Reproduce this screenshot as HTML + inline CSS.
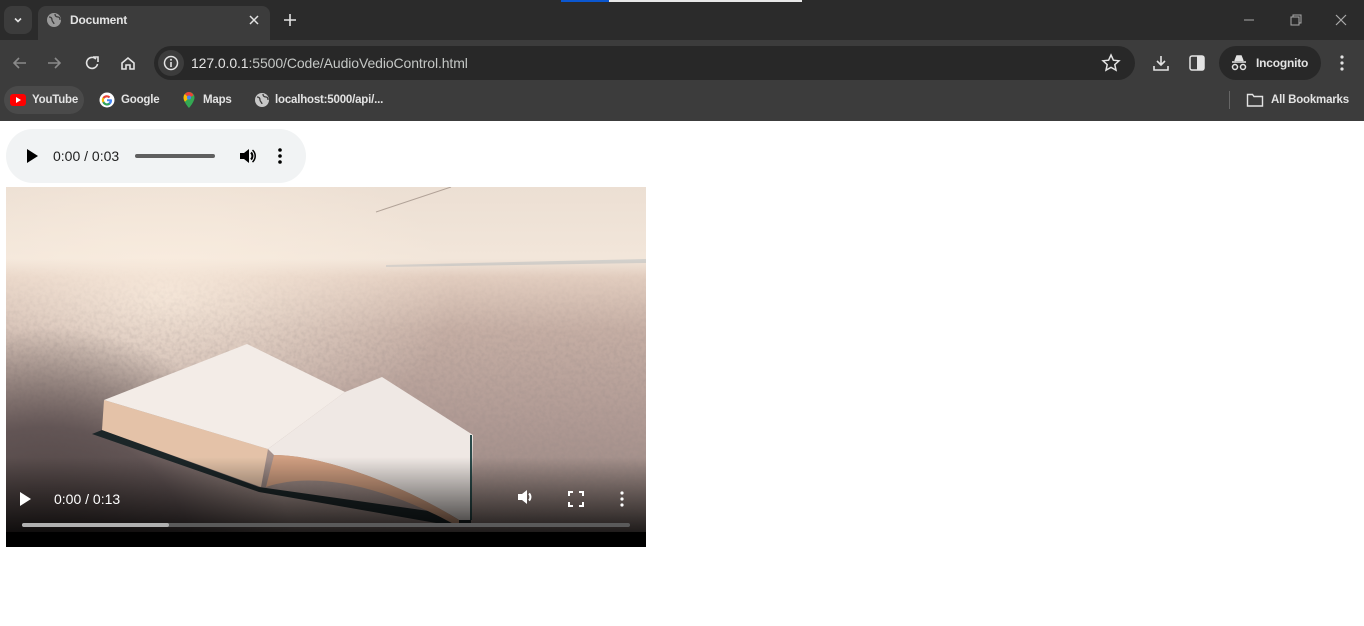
<!DOCTYPE html>
<html><head><meta charset="utf-8"><style>
*{box-sizing:border-box;margin:0;padding:0}
body{width:1364px;height:626px;overflow:hidden;background:#fff;font-family:"Liberation Sans",sans-serif;position:relative}
.abs{position:absolute}
.t{color:#e3e3e3;font-size:11.5px;letter-spacing:-0.2px}
</style></head><body>
<div class="abs" style="left:0;top:0;width:1364px;height:40px;background:#2b2b2b"></div>
<div class="abs" style="left:561px;top:0;width:48px;height:2px;background:#0b57d0"></div>
<div class="abs" style="left:609px;top:0;width:193px;height:2px;background:#e8e8e8"></div>
<div class="abs" style="left:4px;top:6px;width:28px;height:28px;border-radius:8px;background:#3c3c3c"></div>
<svg class="abs" style="left:11px;top:13px" width="14" height="14"><path d="M4 5.5l3 3 3-3" stroke="#e3e3e3" stroke-width="1.6" fill="none"/></svg>
<div class="abs" style="left:38px;top:6px;width:232px;height:34px;background:#3c3c3c;border-radius:8px 8px 0 0"></div>
<svg class="abs" style="left:46px;top:12px" width="16" height="16"><circle cx="8" cy="8" r="7" fill="#9a9a9a"/><path d="M3 5c2 0 3 1 3 3s2 2 2 4M9 2c0 2 1 3 3 3s2 2 2 3" stroke="#3c3c3c" stroke-width="1.3" fill="none"/></svg>
<div class="abs t" style="left:70px;top:13px;font-weight:bold;font-size:12px">Document</div>
<svg class="abs" style="left:247px;top:13px" width="14" height="14"><path d="M3 3l8 8M11 3l-8 8" stroke="#e3e3e3" stroke-width="1.5"/></svg>
<svg class="abs" style="left:282px;top:12px" width="16" height="16"><path d="M8 2v12M2 8h12" stroke="#e3e3e3" stroke-width="1.6"/></svg>
<svg class="abs" style="left:1240px;top:12px" width="120" height="16"><path d="M4 8h10" stroke="#aaa" stroke-width="1"/><rect x="51" y="5" width="8" height="8" stroke="#aaa" fill="none"/><path d="M53 5V3h8v8h-2" stroke="#aaa" fill="none"/><path d="M96 3l10 10M106 3l-10 10" stroke="#aaa" stroke-width="1.2"/></svg>
<div class="abs" style="left:0;top:40px;width:1364px;height:81px;background:#3c3c3c"></div>
<svg class="abs" style="left:10px;top:54px" width="136" height="18"><path d="M16 9H4M9 4L4 9l5 5" stroke="#8a8a8a" stroke-width="1.6" fill="none"/><path d="M38 9h12M45 4l5 5-5 5" stroke="#8a8a8a" stroke-width="1.6" fill="none"/><path d="M86 5a5.5 5.5 0 1 0 1.5 5" stroke="#e3e3e3" stroke-width="1.6" fill="none"/><path d="M83 3h5v5" stroke="#e3e3e3" stroke-width="1.6" fill="none"/><path d="M112 9l6-5 6 5v6h-4v-4h-4v4h-4z" stroke="#e3e3e3" stroke-width="1.6" fill="none"/></svg>
<div class="abs" style="left:154px;top:46px;width:981px;height:34px;border-radius:17px;background:#282828"></div>
<div class="abs" style="left:158px;top:50px;width:26px;height:26px;border-radius:13px;background:#3c3c3c"></div>
<svg class="abs" style="left:163px;top:55px" width="16" height="16"><circle cx="8" cy="8" r="6.5" stroke="#e3e3e3" stroke-width="1.5" fill="none"/><path d="M8 7v5" stroke="#e3e3e3" stroke-width="1.6"/><circle cx="8" cy="4.8" r="1" fill="#e3e3e3"/></svg>
<div class="abs" style="left:191px;top:55px;font-size:14px;color:#e3e3e3;letter-spacing:-0.1px">127.0.0.1<span style="color:#c4c7c5">:5500/Code/AudioVedioControl.html</span></div>
<svg class="abs" style="left:1101px;top:53px" width="20" height="20"><path d="M10 2l2.4 5.2 5.6.6-4.2 3.8 1.2 5.6L10 14.4 5 17.2l1.2-5.6L2 7.8l5.6-.6z" stroke="#e3e3e3" stroke-width="1.5" fill="none"/></svg>
<svg class="abs" style="left:1151px;top:53px" width="20" height="20"><path d="M10 3v9M6 8l4 4 4-4M3 13v4h14v-4" stroke="#e3e3e3" stroke-width="1.6" fill="none"/></svg>
<svg class="abs" style="left:1188px;top:54px" width="18" height="18"><rect x="2" y="2" width="14" height="14" rx="2" stroke="#e3e3e3" stroke-width="1.5" fill="none"/><rect x="9" y="2" width="7" height="14" fill="#e3e3e3"/></svg>
<div class="abs" style="left:1219px;top:46px;width:102px;height:34px;border-radius:17px;background:#282828"></div>
<svg class="abs" style="left:1229px;top:54px" width="20" height="18"><path d="M3 8h14M6 7l2-5h4l2 5" stroke="#e3e3e3" stroke-width="1.6" fill="#e3e3e3"/><circle cx="6" cy="13" r="2.5" stroke="#e3e3e3" stroke-width="1.5" fill="none"/><circle cx="14" cy="13" r="2.5" stroke="#e3e3e3" stroke-width="1.5" fill="none"/></svg>
<div class="abs t" style="left:1256px;top:56px;font-weight:bold;font-size:12px">Incognito</div>
<svg class="abs" style="left:1334px;top:54px" width="16" height="18"><circle cx="8" cy="3" r="1.6" fill="#e3e3e3"/><circle cx="8" cy="9" r="1.6" fill="#e3e3e3"/><circle cx="8" cy="15" r="1.6" fill="#e3e3e3"/></svg>
<div class="abs" style="left:4px;top:86px;width:80px;height:28px;border-radius:14px;background:#4a4a4a"></div>
<svg class="abs" style="left:10px;top:94px" width="16" height="12"><rect x="0" y="0" width="16" height="12" rx="3" fill="#f00"/><path d="M6 3l5 3-5 3z" fill="#fff"/></svg>
<div class="abs t" style="left:32px;top:94px;font-weight:bold">YouTube</div>
<svg class="abs" style="left:99px;top:92px" width="16" height="16"><circle cx="8" cy="8" r="7.5" fill="#fff"/><path d="M12.5 7.3H8v2h2.6a3 3 0 1 1-.8-3.2l1.4-1.4A5 5 0 1 0 13 8z" fill="#4285f4"/><path d="M3.5 5.5A5 5 0 0 1 11.2 4.7L9.8 6.1A3 3 0 0 0 5.3 6.6z" fill="#ea4335"/><path d="M3.5 10.5L5.3 9.4A3 3 0 0 0 9.9 11l1.5 1.2A5 5 0 0 1 3.5 10.5z" fill="#34a853"/><path d="M3.5 5.5l1.8 1.1a3 3 0 0 0 0 2.8l-1.8 1.1a5 5 0 0 1 0-5z" fill="#fbbc05"/></svg>
<div class="abs t" style="left:121px;top:94px;font-weight:bold">Google</div>
<svg class="abs" style="left:182px;top:91px" width="14" height="18"><path d="M7 1a5.5 5.5 0 0 0-5.5 5.5C1.5 11 7 17 7 17s5.5-6 5.5-10.5A5.5 5.5 0 0 0 7 1z" fill="#34a853"/><path d="M7 1a5.5 5.5 0 0 0-4.2 2l4.2 4 4.5-2.8A5.5 5.5 0 0 0 7 1z" fill="#ea4335"/><path d="M2.8 3A5.5 5.5 0 0 0 1.5 6.5c0 1.5.6 3 1.4 4.3L7 7z" fill="#fbbc05"/><circle cx="7" cy="6.5" r="2" fill="#4285f4"/></svg>
<div class="abs t" style="left:203px;top:94px;font-weight:bold">Maps</div>
<svg class="abs" style="left:254px;top:92px" width="16" height="16"><circle cx="8" cy="8" r="7" fill="#c8c8c8"/><path d="M3 5c2 0 3 1 3 3s2 2 2 4M9 2c0 2 1 3 3 3s2 2 2 3" stroke="#3c3c3c" stroke-width="1.3" fill="none"/></svg>
<div class="abs t" style="left:275px;top:94px;font-weight:bold">localhost:5000/api/...</div>
<div class="abs" style="left:1229px;top:91px;width:1px;height:18px;background:#666"></div>
<svg class="abs" style="left:1246px;top:92px" width="18" height="16"><path d="M1.5 2.5h5l1.5 2h8.5v9.5h-15z" stroke="#e3e3e3" stroke-width="1.4" fill="none"/></svg>
<div class="abs t" style="left:1271px;top:94px;font-weight:bold">All Bookmarks</div>
<div class="abs" style="left:6px;top:129px;width:300px;height:54px;border-radius:27px;background:#f1f3f4"></div>
<svg class="abs" style="left:26px;top:148px" width="14" height="16"><path d="M1 1l11 7-11 7z" fill="#000"/></svg>
<div class="abs" style="left:53px;top:148px;font-size:14px;color:#1f1f1f">0:00 / 0:03</div>
<div class="abs" style="left:135px;top:154px;width:80px;height:4px;border-radius:2px;background:#5f5f5f"></div>
<svg class="abs" style="left:238px;top:146px" width="20" height="20"><path d="M2 7h4l5-4v14l-5-4H2z" fill="#000"/><path d="M13 6.5a5 5 0 0 1 0 7" stroke="#000" stroke-width="2" fill="none"/><path d="M14.5 4a8 8 0 0 1 0 12" stroke="#000" stroke-width="1.5" fill="none"/></svg>
<svg class="abs" style="left:274px;top:147px" width="12" height="18"><circle cx="6" cy="3" r="1.8"/><circle cx="6" cy="9" r="1.8"/><circle cx="6" cy="15" r="1.8"/></svg>
<svg class="abs" style="left:6px;top:187px" width="640" height="360" viewBox="0 0 640 360">
<defs>
<linearGradient id="bg" x1="0" y1="0" x2="0" y2="1">
<stop offset="0" stop-color="#ecdfd3"/><stop offset=".2" stop-color="#f2e6da"/><stop offset=".25" stop-color="#e2cdbf"/><stop offset=".4" stop-color="#c5aea4"/><stop offset=".65" stop-color="#b09a94"/><stop offset="1" stop-color="#8e7e7a"/></linearGradient>
<linearGradient id="nm" x1="0" y1="0" x2="0" y2="1"><stop offset="0" stop-color="#fff" stop-opacity="0"/><stop offset=".3" stop-color="#fff" stop-opacity="1"/></linearGradient>
<mask id="m"><rect x="0" y="80" width="640" height="280" fill="url(#nm)"/></mask>
<linearGradient id="bot" x1="0" y1="0" x2="0" y2="1"><stop offset="0" stop-color="#000" stop-opacity="0"/><stop offset=".6" stop-color="#000" stop-opacity=".55"/><stop offset="1" stop-color="#000" stop-opacity=".95"/></linearGradient>
<radialGradient id="dark" gradientUnits="userSpaceOnUse" cx="40" cy="390" r="250"><stop offset="0" stop-color="#3e3533"/><stop offset=".6" stop-color="#55494a" stop-opacity=".85"/><stop offset="1" stop-color="#5a4e4c" stop-opacity="0"/></radialGradient>
<radialGradient id="sun" cx=".25" cy=".3" r=".45"><stop offset="0" stop-color="#fbeee0" stop-opacity=".8"/><stop offset="1" stop-color="#fbeee0" stop-opacity="0"/></radialGradient>
<filter id="n"><feTurbulence type="fractalNoise" baseFrequency=".25" numOctaves="2" seed="3"/><feColorMatrix values="0 0 0 0 0.3  0 0 0 0 0.25  0 0 0 0 0.24  0 0 0 .9 -.35"/></filter>
</defs>
<rect width="640" height="360" fill="url(#bg)"/>
<path d="M380 78L640 72V76L380 80z" fill="#8fa2ae" opacity=".3"/>
<rect width="640" height="360" fill="url(#sun)"/>
<g mask="url(#m)"><rect x="0" y="80" width="640" height="280" filter="url(#n)" opacity=".55"/></g>
<rect x="0" y="0" width="640" height="360" fill="url(#dark)"/>
<path d="M370 25L445 0" stroke="#8a7a70" stroke-width="1" opacity=".6"/>
<path d="M86 247L96 243L253 300L465 330V336L453 340L253 305z" fill="#1c2628"/>
<path d="M98 213L96 243L255 300L262 262z" fill="#e4c2a8"/>
<path d="M98 213L241 157L339 205L262 262z" fill="#f3ece7"/>
<path d="M262 262L339 205L376 190L467 248L465 333L453 333C400 300 320 268 268 268z" fill="#efe8e4"/>
<path d="M268 268C320 268 400 300 453 333L453 340C400 310 320 280 260 300z" fill="#d2a082"/>
<path d="M465 248V333" stroke="#2a4a4a" stroke-width="2"/>
<rect y="270" width="640" height="90" fill="url(#bot)"/>
<rect y="345" width="640" height="15" fill="#000"/>
<path d="M14 305l11 7-11 7z" fill="#fff"/>
<text x="48" y="317" fill="#fff" font-family="Liberation Sans" font-size="14">0:00 / 0:13</text>
<path d="M512 307h4l5-4v14l-5-4h-4z" fill="#fff"/><path d="M523 306.5a5 5 0 0 1 0 7" stroke="#fff" stroke-width="2" fill="none"/>
<path d="M563 309v-4h4M573 305h4v4M577 315v4h-4M567 319h-4v-4" stroke="#fff" stroke-width="2" fill="none"/>
<circle cx="616" cy="306" r="1.6" fill="#fff"/><circle cx="616" cy="312" r="1.6" fill="#fff"/><circle cx="616" cy="318" r="1.6" fill="#fff"/>
<rect x="16" y="336" width="608" height="4" rx="2" fill="#5a5a5a"/>
<rect x="16" y="336" width="147" height="4" rx="2" fill="#b0b0b0"/>
</svg>
</body></html>
